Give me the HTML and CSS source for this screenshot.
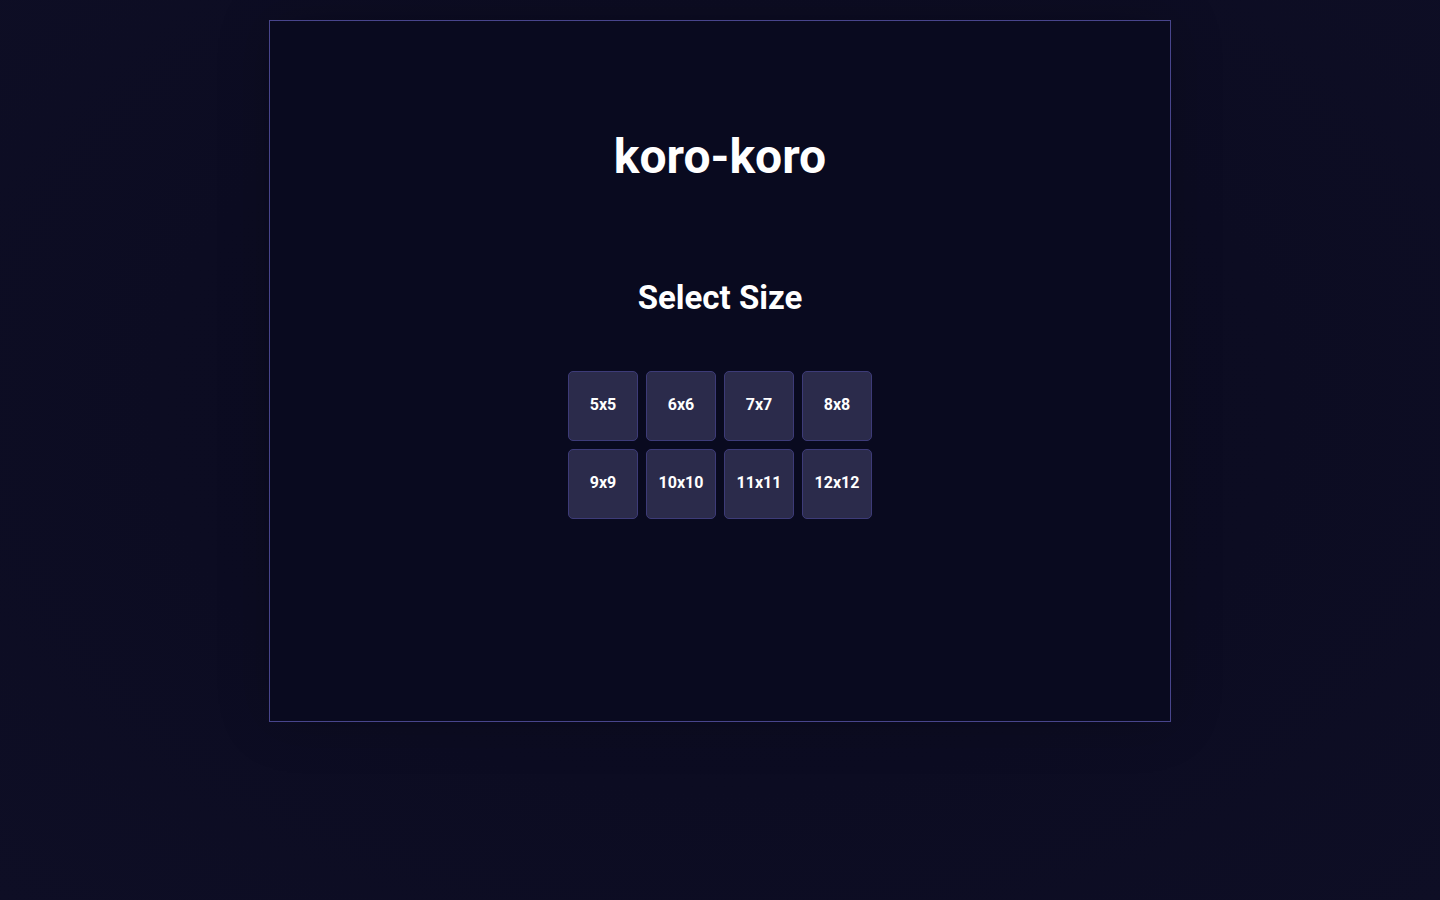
FILE: index.html
```html
<!DOCTYPE html>
<html lang="en">

<head>
    <meta charset="UTF-8">
    <meta name="viewport" content="width=device-width, initial-scale=1.0">
    <title>koro-koro</title>
    <link rel="stylesheet" href="styles.css">
</head>

<body>
    <div id="board">
        <h1 class="title">koro-koro</h1>
        <h2 class="subtitle">Select Size</h2>
        <div class="sizes">
            <button class="size">5x5</button>
            <button class="size">6x6</button>
            <button class="size">7x7</button>
            <button class="size">8x8</button>
            <button class="size">9x9</button>
            <button class="size">10x10</button>
            <button class="size">11x11</button>
            <button class="size">12x12</button>
        </div>
    </div>
</body>

</html>
```

FILE: styles.css
```css
body {
    margin: 0;
    min-height: 900px;
    background: radial-gradient(ellipse at 50% 45%, #0b0b20 0%, #0c0c22 55%, #0e0e25 100%);
    font-family: Roboto, "Liberation Sans", sans-serif;
    color: #ffffff;
}

#board {
    margin: 20px auto 0;
    width: 900px;
    height: 700px;
    border: 1px solid #48458c;
    background: #090a1f;
    box-shadow: 0 0 50px rgba(0, 0, 0, 0.2);
    display: flex;
    flex-direction: column;
    align-items: center;
}

.title {
    margin: 108px 0 0;
    font-size: 48px;
    line-height: 56px;
    font-weight: 700;
}

.subtitle {
    margin: 93px 0 0;
    font-size: 33px;
    line-height: 40px;
    font-weight: 700;
}

.sizes {
    margin-top: 53px;
    display: grid;
    grid-template-columns: repeat(4, 70px);
    gap: 8px;
}

.size {
    width: 70px;
    height: 70px;
    padding: 0 0 4px;
    border: 1px solid #3d3b78;
    border-radius: 5px;
    background: #2b2b4b;
    color: #ffffff;
    font-family: Roboto, "Liberation Sans", sans-serif;
    font-size: 16px;
    font-weight: 700;
    cursor: pointer;
}
```
